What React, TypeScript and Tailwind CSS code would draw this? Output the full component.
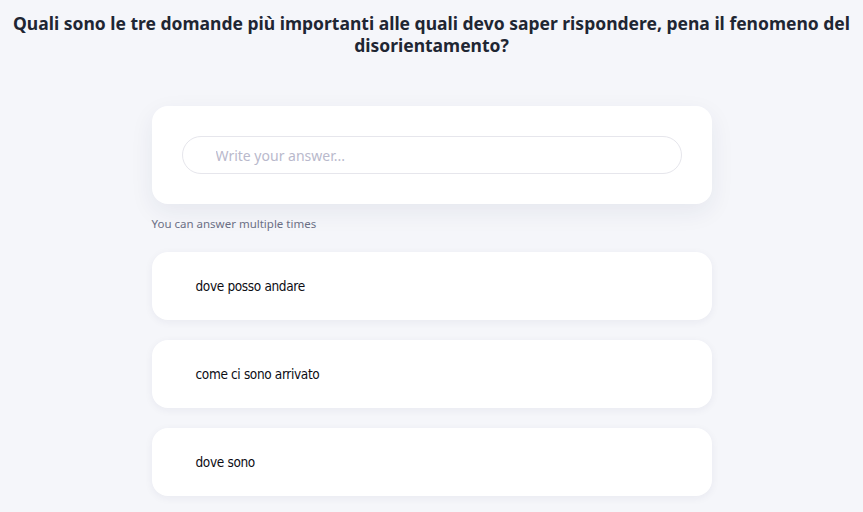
const answers = ['dove posso andare', 'come ci sono arrivato', 'dove sono'];

export default function App() {
  return (
    <div className="min-h-[512px] bg-[#f5f6fa] font-['Noto_Sans','Lato',sans-serif]">
      <h1 className="px-3 pt-[12px] text-center text-[17.5px] font-bold leading-[22px] text-[#1f2633]">
        Quali sono le tre domande più importanti alle quali devo saper rispondere, pena il fenomeno del disorientamento?
      </h1>

      <div className="mx-auto mt-[50px] w-[560px]">
        {/* Input card */}
        <div className="rounded-2xl bg-white px-[30px] py-[30px] shadow-[0_8px_24px_rgba(30,40,80,0.07)]">
          <input
            type="text"
            placeholder="Write your answer..."
            className="h-[38px] w-full rounded-full border border-[#e6e6ec] px-[33px] text-[14px] text-[#333] outline-none placeholder:text-[#b9b9cc]"
          />
        </div>

        <p className="mt-[12px] text-[11.5px] leading-[16px] text-[#6b6f85]">You can answer multiple times</p>

        {/* Answers */}
        <div className="mt-[20px] flex flex-col gap-[20px]">
          {answers.map((a) => (
            <div
              key={a}
              className="flex h-[68px] items-center rounded-2xl bg-white px-[44px] font-['DejaVu_Sans_Condensed','DejaVu_Sans',sans-serif] text-[13.5px] tracking-[-0.35px] text-[#0c0c14] shadow-[0_2px_8px_rgba(30,40,80,0.06)]"
            >
              {a}
            </div>
          ))}
        </div>
      </div>
    </div>
  );
}
